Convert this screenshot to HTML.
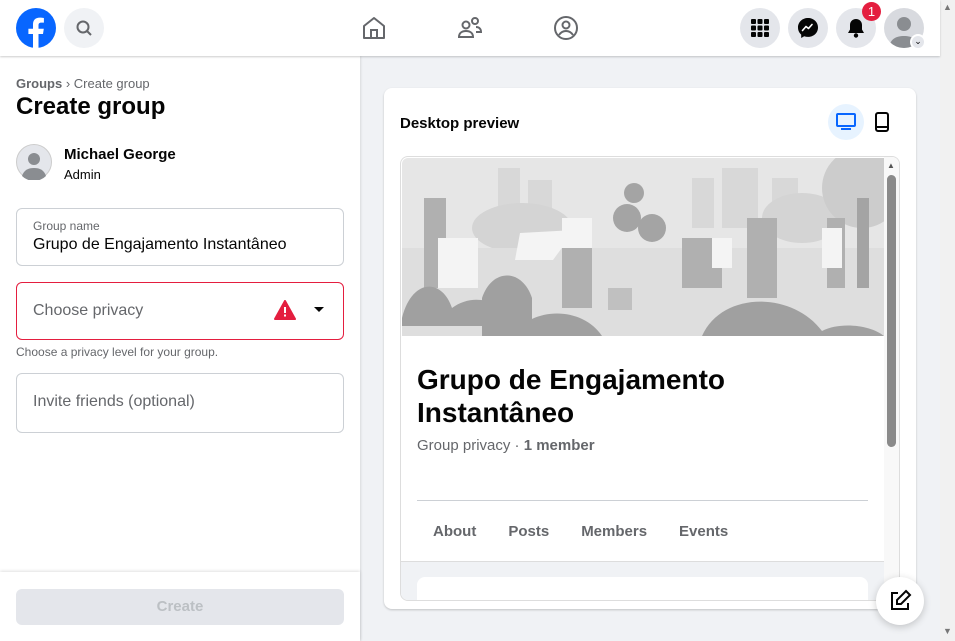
<!DOCTYPE html>
<html><head><meta charset="utf-8"><style>
*{box-sizing:border-box;margin:0;padding:0}
body{width:955px;height:641px;overflow:hidden;font-family:"Liberation Sans",Arial,sans-serif;background:#f0f2f5;position:relative;color:#050505}
.top{position:absolute;left:0;top:0;width:940px;height:56px;background:#fff;box-shadow:0 1px 2px rgba(0,0,0,.2);z-index:5}
.circ{position:absolute;width:40px;height:40px;border-radius:50%;background:#e4e6eb;top:8px}
.left{position:absolute;left:0;top:56px;width:360px;height:585px;background:#fff;box-shadow:1px 0 2px rgba(0,0,0,.1)}
.field{position:absolute;left:16px;width:328px;border:1px solid #ccd0d5;border-radius:6px}
.sb{position:absolute;left:940px;top:0;width:15px;height:641px;background:#f1f1f1}
.card{position:absolute;left:384px;top:88px;width:532px;height:521px;background:#fff;border-radius:8px;box-shadow:0 1px 2px rgba(0,0,0,.2)}
.prev{position:absolute;left:16px;top:68px;width:500px;height:445px;border:1px solid #ddd;border-radius:8px;overflow:hidden;background:#fff}
</style></head><body>
<div class="top">
 <svg style="position:absolute;left:16px;top:8px" width="40" height="40" viewBox="0 0 40 40"><circle cx="20" cy="20" r="20" fill="#0866ff"/><path d="M22.5 40V26h4.5l.8-5.3h-5.3v-3.4c0-1.5.6-2.7 2.8-2.7h2.6V10c-1-.2-2.6-.4-4.2-.4-4.3 0-6.7 2.5-6.7 6.8v4.3h-4.6V26H17v14z" fill="#fff"/></svg>
 <div class="circ" style="left:64px;background:#f0f2f5"><svg width="40" height="40"><circle cx="19" cy="19" r="5.5" fill="none" stroke="#65676b" stroke-width="2"/><path d="M23 23l4 4" stroke="#65676b" stroke-width="2"/></svg></div>
 <svg style="position:absolute;left:361px;top:15px" width="26" height="26" viewBox="0 0 26 26" fill="none" stroke="#65676b" stroke-width="2"><path d="M3 11L13 3l10 8v12H3z" stroke-linejoin="round"/><path d="M10 23v-8h6v8"/></svg>
 <svg style="position:absolute;left:457px;top:15px" width="26" height="26" viewBox="0 0 26 26" fill="none" stroke="#65676b" stroke-width="2"><circle cx="9" cy="10" r="3.5"/><path d="M2 22c0-4 3-6 7-6s7 2 7 6z"/><circle cx="18" cy="6" r="3"/><path d="M19 12c3 0 5 2 5 5h-5"/></svg>
 <svg style="position:absolute;left:553px;top:15px" width="26" height="26" viewBox="0 0 26 26" fill="none" stroke="#65676b" stroke-width="2"><circle cx="13" cy="13" r="11"/><circle cx="13" cy="10" r="3.5"/><path d="M6 20c2-3 4-4 7-4s5 1 7 4"/></svg>
 <div class="circ" style="left:740px"><svg width="40" height="40"><g fill="#050505"><rect x="11" y="11" width="5" height="5" rx="1"/><rect x="17.5" y="11" width="5" height="5" rx="1"/><rect x="24" y="11" width="5" height="5" rx="1"/><rect x="11" y="17.5" width="5" height="5" rx="1"/><rect x="17.5" y="17.5" width="5" height="5" rx="1"/><rect x="24" y="17.5" width="5" height="5" rx="1"/><rect x="11" y="24" width="5" height="5" rx="1"/><rect x="17.5" y="24" width="5" height="5" rx="1"/><rect x="24" y="24" width="5" height="5" rx="1"/></g></svg></div>
 <div class="circ" style="left:788px"><svg width="40" height="40"><path d="M20 10c-5.6 0-10 4-10 9.5 0 2.9 1.2 5.4 3.2 7.1V30l3-1.7c1.2.4 2.5.6 3.8.6 5.6 0 10-4 10-9.4S25.6 10 20 10z" fill="#050505"/><path d="M14.5 22.5l3.5-4 2.5 2 3.5-4-3.5 4-2.5-2z" fill="none" stroke="#fff" stroke-width="1.6" stroke-linejoin="round"/></svg></div>
 <div class="circ" style="left:836px"><svg width="40" height="40"><path d="M20 11c-3.5 0-6 2.6-6 6v4.5l-2 3.5h16l-2-3.5V17c0-3.4-2.5-6-6-6z" fill="#050505"/><circle cx="20" cy="27.5" r="2.2" fill="#050505"/></svg></div>
 <div style="position:absolute;left:862px;top:2px;width:19px;height:19px;border-radius:50%;background:#e41e3f;color:#fff;font-size:13px;text-align:center;line-height:19px">1</div>
 <div class="circ" style="left:884px;overflow:hidden;background:#d8dadf"><svg width="40" height="40"><circle cx="20" cy="16" r="7" fill="#8a8d91"/><path d="M5 40c1-9 7-12 15-12s14 3 15 12z" fill="#8a8d91"/></svg></div>
 <div style="position:absolute;left:910px;top:34px;width:16px;height:16px;border-radius:50%;background:#e4e6eb;border:2px solid #fff;font-size:9px;text-align:center;line-height:11px">⌄</div>
</div>
<div class="left">
 <div style="position:absolute;left:16px;top:20px;font-size:13px;color:#65676b"><b>Groups</b> › Create group</div>
 <div style="position:absolute;left:16px;top:37px;font-size:24px;font-weight:bold">Create group</div>
 <svg style="position:absolute;left:16px;top:88px" width="36" height="36"><circle cx="18" cy="18" r="17.5" fill="#e4e6eb" stroke="#ccc"/><circle cx="18" cy="15" r="6" fill="#8a8d91"/><path d="M6 32c2-6 6-8 12-8s10 2 12 8a17 17 0 0 1-24 0z" fill="#8a8d91"/></svg>
 <div style="position:absolute;left:64px;top:90px;font-size:15px;font-weight:bold">Michael George</div>
 <div style="position:absolute;left:64px;top:111px;font-size:13px">Admin</div>
 <div class="field" style="top:152px;height:58px"><div style="position:absolute;left:16px;top:10px;font-size:12px;color:#65676b">Group name</div><div style="position:absolute;left:16px;top:27px;font-size:16px">Grupo de Engajamento Instantâneo</div></div>
 <div class="field" style="top:226px;height:58px;border-color:#e41e3f"><div style="position:absolute;left:16px;top:19px;font-size:16px;color:#65676b">Choose privacy</div>
  <svg style="position:absolute;left:257px;top:17px" width="22" height="20"><path d="M11 1L21 19H1z" fill="#e41e3f" stroke="#e41e3f" stroke-linejoin="round" stroke-width="2"/><rect x="10" y="7" width="2" height="6" fill="#fff"/><rect x="10" y="14.5" width="2" height="2" fill="#fff"/></svg>
  <svg style="position:absolute;left:296px;top:23px" width="12" height="8"><path d="M1 1h10L6 6z" fill="#050505"/></svg></div>
 <div style="position:absolute;left:16px;top:289px;font-size:12px;color:#65676b">Choose a privacy level for your group.</div>
 <div class="field" style="top:317px;height:60px"><div style="position:absolute;left:16px;top:19px;font-size:16px;color:#65676b">Invite friends (optional)</div></div>
 <div style="position:absolute;left:0;top:516px;width:360px;height:69px;background:#fff;box-shadow:0 -1px 3px rgba(0,0,0,.12)"><div style="position:absolute;left:16px;top:17px;width:328px;height:36px;background:#e4e6eb;border-radius:6px;color:#bcc0c4;font-size:15px;font-weight:bold;text-align:center;line-height:36px">Create</div></div>
</div>
<div class="card">
 <div style="position:absolute;left:16px;top:27px;font-size:15px;font-weight:bold">Desktop preview</div>
 <div style="position:absolute;left:444px;top:16px;width:36px;height:36px;border-radius:50%;background:#e7f3ff"><svg width="36" height="36"><rect x="9" y="10" width="18" height="12" rx="1" fill="none" stroke="#0866ff" stroke-width="2"/><rect x="13" y="24" width="10" height="2" fill="#0866ff"/></svg></div>
 <svg style="position:absolute;left:490px;top:24px" width="16" height="20"><rect x="2" y="1" width="12" height="18" rx="2" fill="none" stroke="#050505" stroke-width="2"/><rect x="3" y="14" width="10" height="2" fill="#050505"/></svg>
 <div class="prev">
  <svg style="position:absolute;left:1px;top:1px" width="482" height="178">
   <rect width="482" height="178" rx="6" fill="#e6e6e6"/>
   <g fill="#d8d8d8"><rect x="96" y="10" width="22" height="60"/><rect x="126" y="22" width="24" height="50"/><rect x="290" y="20" width="22" height="50"/><rect x="320" y="10" width="36" height="60"/><rect x="370" y="20" width="26" height="50"/></g>
   <ellipse cx="120" cy="70" rx="50" ry="25" fill="#d4d4d4"/><ellipse cx="400" cy="60" rx="40" ry="25" fill="#d4d4d4"/>
   <rect x="0" y="90" width="482" height="88" fill="#dedede"/>
   <circle cx="460" cy="30" r="40" fill="#cccccc"/><rect x="455" y="40" width="12" height="90" fill="#a4a4a4"/>
   <g fill="#b0b0b0"><rect x="22" y="40" width="22" height="90"/><rect x="160" y="60" width="30" height="90"/><rect x="280" y="80" width="40" height="50"/><rect x="345" y="60" width="30" height="80"/><rect x="425" y="60" width="18" height="70"/></g>
   <g fill="#f4f4f4"><rect x="36" y="80" width="40" height="50"/><rect x="160" y="60" width="30" height="30"/><rect x="310" y="80" width="20" height="30"/><rect x="420" y="70" width="20" height="40"/><path d="M118 75l55 -3-22 30h-38z"/></g>
   <g fill="#a4a4a4"><circle cx="225" cy="60" r="14"/><circle cx="250" cy="70" r="14"/><circle cx="232" cy="35" r="10"/></g>
   <rect x="206" y="130" width="24" height="22" fill="#c0c0c0"/>
   <g fill="#a0a0a0"><path d="M0 160c10-40 40-40 50-10 20-15 50-10 60 18H0z"/><path d="M110 178c20-30 70-30 90 0z"/><path d="M300 178c20-45 90-45 120 -5 20-10 50-5 62 5z"/><path d="M80 140c10 -30 40 -30 50 0v38H80z"/></g>
  </svg>
  <div style="position:absolute;left:16px;top:206px;font-size:28px;font-weight:bold;line-height:33px">Grupo de Engajamento<br>Instantâneo</div>
  <div style="position:absolute;left:16px;top:280px;font-size:15px;color:#65676b">Group privacy · <b>1 member</b></div>
  <div style="position:absolute;left:16px;top:343px;width:451px;height:1px;background:#ccd0d5"></div>
  <div style="position:absolute;left:32px;top:366px;font-size:15px;font-weight:bold;color:#65676b">About<span style="margin-left:32px">Posts</span><span style="margin-left:32px">Members</span><span style="margin-left:32px">Events</span></div>
  <div style="position:absolute;left:0;top:404px;width:483px;height:45px;background:#f0f2f5;border-top:1px solid #ddd"><div style="position:absolute;left:16px;top:15px;width:451px;height:30px;background:#fff;border-radius:8px"></div></div>
  <div style="position:absolute;left:483px;top:0;width:16px;height:445px;background:#f8f8f8"><div style="position:absolute;left:3px;top:4px;font-size:8px;color:#555">▲</div><div style="position:absolute;left:3px;top:18px;width:9px;height:272px;border-radius:5px;background:#8a8a8a"></div></div>
 </div>
</div>
<div style="position:absolute;left:876px;top:577px;width:48px;height:48px;border-radius:50%;background:#fff;box-shadow:0 2px 8px rgba(0,0,0,.2)"><svg width="48" height="48" fill="none" stroke="#050505" stroke-width="2"><path d="M22 16h-6v16h16v-6"/><path d="M30 14l4 4-9 9h-4v-4z"/></svg></div>
<div class="sb"><div style="position:absolute;left:3px;top:2px;font-size:9px;color:#777">▲</div><div style="position:absolute;left:3px;top:626px;font-size:9px;color:#777">▼</div></div>
</body></html>
